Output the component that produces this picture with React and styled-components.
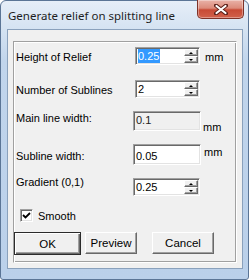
import React from 'react';
import styled, { createGlobalStyle } from 'styled-components';

const GlobalStyle = createGlobalStyle`
  html, body {
    margin: 0;
    padding: 0;
    background: #ffffff;
  }
  * {
    box-sizing: border-box;
  }
`;

const Window = styled.div`
  width: 249px;
  height: 280px;
  display: flex;
  flex-direction: column;
  border: 1px solid #5b7596;
  border-radius: 6px 6px 3px 3px;
  padding: 0 5px 10px 6px;
  background: linear-gradient(180deg, #e6eef8 0px, #d5e3f2 28px, #c1d5ec 60px, #bad0ea 100%);
  font-family: 'Liberation Sans', Arial, sans-serif;
  font-size: 11px;
  color: #000;
`;

const TitleBar = styled.div`
  height: 28px;
  display: flex;
  justify-content: space-between;
  align-items: flex-start;
  flex: none;
`;

const Title = styled.div`
  padding: 7px 0 0 1px;
  font-family: 'Noto Sans', 'Open Sans', sans-serif;
  font-size: 11.5px;
  color: #1e1e1e;
`;

const CloseButton = styled.div`
  width: 47px;
  height: 19px;
  margin-top: -1px;
  margin-right: -1px;
  border: 1px solid #7e3228;
  border-top: none;
  border-radius: 0 0 5px 5px;
  background: linear-gradient(180deg, #e9b2a8 0%, #dc8b7b 45%, #c84a35 55%, #d1614b 100%);
  box-shadow: inset 0 0 0 1px rgba(255, 255, 255, 0.35);
  display: flex;
  align-items: center;
  justify-content: center;
`;

const Client = styled.div`
  flex: 1;
  border: 1px solid #8aa1bc;
  background: #f0f0f0;
  padding: 11px 5px 5px 5px;
  display: flex;
`;

const Panel = styled.div`
  flex: 1;
  border-style: solid;
  border-width: 1px;
  border-color: #a0a0a0 #ffffff #ffffff #a0a0a0;
  box-shadow: inset 1px 1px 0 #ffffff, inset -1px -1px 0 #a0a0a0;
  padding: 5px 0 0 2px;
  display: flex;
  flex-direction: column;
`;

const Row = styled.div`
  height: ${(p) => p.h}px;
  display: flex;
  align-items: flex-start;
  flex: none;
`;

const Label = styled.div`
  width: ${(p) => p.w}px;
  margin-top: ${(p) => p.y}px;
  line-height: 13px;
  white-space: nowrap;
`;

const Field = styled.div`
  width: ${(p) => p.w}px;
  height: ${(p) => p.h}px;
  margin-top: ${(p) => p.y || 0}px;
  display: flex;
  border-style: solid;
  border-width: 1px;
  border-color: #a0a0a0 #ffffff #ffffff #a0a0a0;
  box-shadow: inset 1px 1px 0 #696969, inset -1px -1px 0 #e3e3e3;
  background: ${(p) => (p.disabled ? '#f0f0f0' : '#ffffff')};
  color: ${(p) => (p.disabled ? '#222' : '#000')};
`;

const FieldText = styled.div`
  flex: 1;
  padding: ${(p) => p.top || 2}px 0 0 2px;
  line-height: 13px;
`;

const Selected = styled.span`
  background: #3399ff;
  color: #ffffff;
  display: inline-block;
  padding: 0 1px 0 0;
  height: 14px;
  margin-top: -1px;
  line-height: 14px;
`;

const Spinner = styled.div`
  width: 15px;
  padding: 1px 1px 1px 0;
  display: flex;
  flex-direction: column;
`;

const SpinHalf = styled.div`
  flex: 1;
  background: #f0f0f0;
  border-style: solid;
  border-width: 1px;
  border-color: #ffffff #696969 #696969 #ffffff;
  box-shadow: inset -1px -1px 0 #a0a0a0;
  display: flex;
  align-items: center;
  justify-content: center;
`;

const Arrow = styled.div`
  width: 0;
  height: 0;
  border-left: 2px solid transparent;
  border-right: 2px solid transparent;
  ${(p) => (p.up ? 'border-bottom: 2px solid #000;' : 'border-top: 2px solid #000;')}
`;

const Unit = styled.div`
  margin-top: ${(p) => p.y}px;
  margin-left: ${(p) => p.x}px;
  line-height: 13px;
`;

const CheckRow = styled.div`
  height: 24px;
  display: flex;
  align-items: flex-start;
  padding: 1px 0 0 4px;
  flex: none;
`;

const CheckBox = styled.div`
  width: 13px;
  height: 13px;
  border-style: solid;
  border-width: 1px;
  border-color: #a0a0a0 #ffffff #ffffff #a0a0a0;
  box-shadow: inset 1px 1px 0 #696969, inset -1px -1px 0 #e3e3e3;
  background: #ffffff;
  display: flex;
  align-items: center;
  justify-content: center;
`;

const CheckLabel = styled.div`
  margin: 1px 0 0 5px;
  line-height: 13px;
`;

const ButtonRow = styled.div`
  display: flex;
  align-items: flex-start;
  margin-left: -2px;
`;

const Button = styled.div`
  width: ${(p) => p.w}px;
  height: ${(p) => p.h}px;
  margin-left: ${(p) => p.x}px;
  background: #f0f0f0;
  display: flex;
  align-items: center;
  justify-content: center;
  border-style: solid;
  border-width: 1px;
  border-color: ${(p) => (p.primary ? '#2b2b2b' : '#ffffff #696969 #696969 #ffffff')};
  box-shadow: ${(p) =>
    p.primary
      ? 'inset 1px 1px 0 #ffffff, inset -1px -1px 0 #696969, inset -2px -2px 0 #a0a0a0'
      : 'inset -1px -1px 0 #a0a0a0'};
  font-size: 11.5px;
`;

const SpinField = ({ w, h, y, children }) => (
  <Field w={w} h={h} y={y}>
    <FieldText>{children}</FieldText>
    <Spinner>
      <SpinHalf>
        <Arrow up />
      </SpinHalf>
      <SpinHalf>
        <Arrow />
      </SpinHalf>
    </Spinner>
  </Field>
);

const App = () => (
  <>
    <GlobalStyle />
    <Window>
      <TitleBar>
        <Title>Generate relief on splitting line</Title>
        <CloseButton>
          <svg width="14" height="11" viewBox="0 0 14 11">
            <path d="M2 1.5 L12 9.5 M12 1.5 L2 9.5" stroke="#5b1f18" strokeWidth="4" strokeLinecap="round" />
            <path d="M2.5 2 L11.5 9 M11.5 2 L2.5 9" stroke="#ffffff" strokeWidth="2.2" strokeLinecap="round" />
          </svg>
        </CloseButton>
      </TitleBar>
      <Client>
        <Panel>
          <Row h={33}>
            <Label w={119} y={4}>Height of Relief</Label>
            <SpinField w={65} h={18}>
              <Selected>0.25</Selected>
            </SpinField>
            <Unit x={5} y={4}>mm</Unit>
          </Row>
          <Row h={31}>
            <Label w={119} y={4}>Number of Sublines</Label>
            <SpinField w={65} h={18}>2</SpinField>
          </Row>
          <Row h={33}>
            <Label w={117} y={1}>Main line width:</Label>
            <Field w={68} h={20} disabled>
              <FieldText>0.1</FieldText>
            </Field>
            <Unit x={2} y={10}>mm</Unit>
          </Row>
          <Row h={31}>
            <Label w={117} y={6}>Subline width:</Label>
            <Field w={68} h={21}>
              <FieldText top={5}>0.05</FieldText>
            </Field>
            <Unit x={3} y={2}>mm</Unit>
          </Row>
          <Row h={33}>
            <Label w={117} y={1}>Gradient (0,1)</Label>
            <SpinField w={67} h={18} y={3}>0.25</SpinField>
          </Row>
          <CheckRow>
            <CheckBox>
              <svg width="9" height="9" viewBox="0 0 9 9">
                <path d="M1 4 L3.5 6.5 L8 2" stroke="#000" strokeWidth="1.8" fill="none" />
              </svg>
            </CheckBox>
            <CheckLabel>Smooth</CheckLabel>
          </CheckRow>
          <ButtonRow>
            <Button w={67} h={23} x={0} primary>OK</Button>
            <Button w={52} h={22} x={4}>Preview</Button>
            <Button w={62} h={22} x={15}>Cancel</Button>
          </ButtonRow>
        </Panel>
      </Client>
    </Window>
  </>
);

export default App;
